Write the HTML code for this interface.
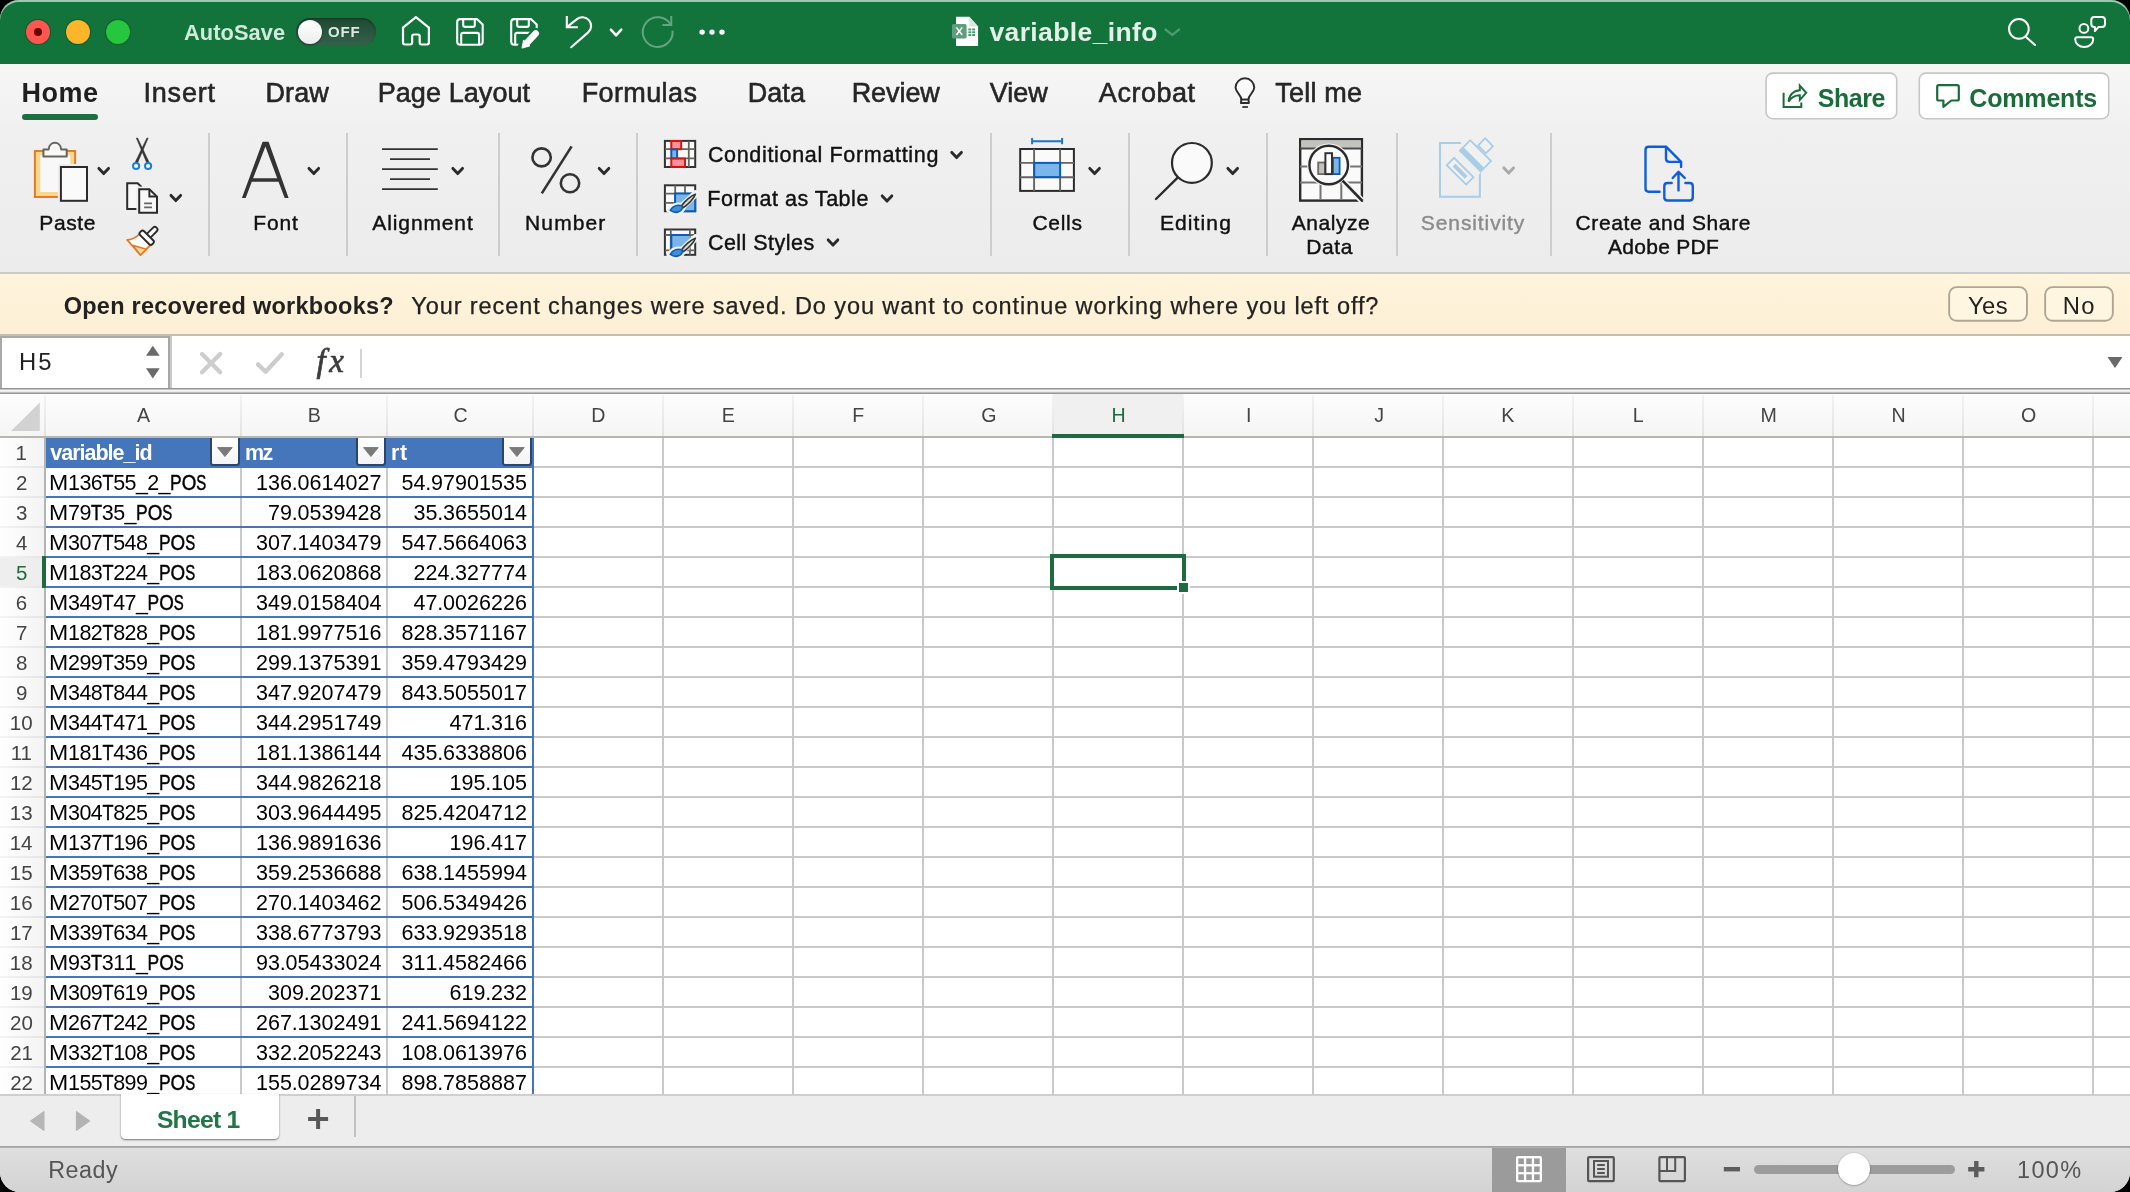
<!DOCTYPE html>
<html><head><meta charset="utf-8"><title>variable_info</title>
<style>
html,body{margin:0;padding:0;background:#000;}
body{width:2130px;height:1192px;overflow:hidden;position:relative;font-family:"Liberation Sans",sans-serif;}
#win{will-change:transform;position:absolute;left:0;top:0;width:2130px;height:1192px;border-radius:19px 19px 20px 20px;overflow:hidden;background:#fff;}
.t{position:absolute;white-space:pre;line-height:1;font-family:"Liberation Sans",sans-serif;}
.b{position:absolute;box-sizing:border-box;}
svg{overflow:visible;}
</style></head><body><div id="win">
<div class="b" style="left:0px;top:0px;width:2130px;height:64px;background:#12733b;"></div>
<div class="b" style="left:0px;top:0px;width:2130px;height:64px;border-radius:19px 19px 0 0;box-shadow:inset 0 2px 0 #9ccab0, inset 1.5px 0 0 rgba(156,202,176,0);"></div>
<div class="b" style="left:0px;top:64px;width:2130px;height:61px;background:linear-gradient(#f6f6f6,#f1f1f1);"></div>
<div class="b" style="left:0px;top:125px;width:2130px;height:147px;background:linear-gradient(#f0f0f0,#ececec);"></div>
<div class="b" style="left:0px;top:272px;width:2130px;height:2px;background:#c9c9c9;"></div>
<div class="b" style="left:0px;top:274px;width:2130px;height:60px;background:linear-gradient(#fff5dc,#fcefd5);"></div>
<div class="b" style="left:0px;top:334px;width:2130px;height:2px;background:#c6bfab;"></div>
<div class="b" style="left:0px;top:336px;width:2130px;height:53px;background:#fff;"></div>
<div class="b" style="left:0px;top:388px;width:2130px;height:1px;background:#959595;"></div>
<div class="b" style="left:0px;top:389px;width:2130px;height:1px;background:#c4c4c4;"></div>
<div class="b" style="left:0px;top:390px;width:2130px;height:1px;background:#f6f6f6;"></div>
<div class="b" style="left:0px;top:391px;width:2130px;height:1px;background:#ececec;"></div>
<div class="b" style="left:0px;top:392px;width:2130px;height:1px;background:#bdbdbd;"></div>
<div class="b" style="left:0px;top:393px;width:2130px;height:1px;background:#989898;"></div>
<div class="b" style="left:25px;top:19px;width:26px;height:26px;border-radius:50%;background:#0d5a2d;"></div>
<div class="b" style="left:26px;top:20px;width:24px;height:24px;border-radius:50%;background:#ff5650;"></div>
<div class="b" style="left:65px;top:19px;width:26px;height:26px;border-radius:50%;background:#0d5a2d;"></div>
<div class="b" style="left:66px;top:20px;width:24px;height:24px;border-radius:50%;background:#fdb52a;"></div>
<div class="b" style="left:105px;top:19px;width:26px;height:26px;border-radius:50%;background:#0d5a2d;"></div>
<div class="b" style="left:106px;top:20px;width:24px;height:24px;border-radius:50%;background:#27c63f;"></div>
<div class="b" style="left:34px;top:28px;width:8px;height:8px;border-radius:50%;background:#6b0000;"></div>
<span class="t" style="left:184.06px;top:22px;font-size:21.8px;color:#d5e8dc;font-weight:bold;letter-spacing:0.063px;">AutoSave</span>
<div class="b" style="left:296.3px;top:17.9px;width:79.7px;height:27.9px;border-radius:14px;background:linear-gradient(#1d4a30,#34614b);box-shadow:inset 0 1px 2px rgba(0,0,0,.3);"></div>
<div class="b" style="left:297.5px;top:19.7px;width:24.5px;height:24.5px;border-radius:50%;background:linear-gradient(#ffffff,#ededed);box-shadow:0 1px 2px rgba(0,0,0,.4);"></div>
<span class="t" style="left:328.08px;top:24px;font-size:15px;color:#dce9e1;font-weight:bold;letter-spacing:0.836px;">OFF</span>
<span class="t" style="left:989.40px;top:19px;font-size:26.5px;color:#e4f0e9;font-weight:bold;letter-spacing:0.388px;">variable_info</span>
<span class="t" style="left:21.59px;top:80px;font-size:27px;color:#1f1f1f;font-weight:bold;letter-spacing:0.505px;">Home</span>
<div class="b" style="left:22px;top:114px;width:76px;height:6px;background:#1c6f3f;border-radius:3px;"></div>
<span class="t" style="left:143.41px;top:80px;font-size:27px;color:#262626;letter-spacing:0.833px;-webkit-text-stroke:0.6px #262626;">Insert</span>
<span class="t" style="left:265.39px;top:80px;font-size:27px;color:#262626;letter-spacing:0.148px;-webkit-text-stroke:0.6px #262626;">Draw</span>
<span class="t" style="left:377.69px;top:80px;font-size:27px;color:#262626;letter-spacing:0.079px;-webkit-text-stroke:0.6px #262626;">Page Layout</span>
<span class="t" style="left:581.69px;top:80px;font-size:27px;color:#262626;letter-spacing:0.381px;-webkit-text-stroke:0.6px #262626;">Formulas</span>
<span class="t" style="left:747.69px;top:80px;font-size:27px;color:#262626;letter-spacing:0.061px;-webkit-text-stroke:0.6px #262626;">Data</span>
<span class="t" style="left:851.69px;top:80px;font-size:27px;color:#262626;letter-spacing:-0.076px;-webkit-text-stroke:0.6px #262626;">Review</span>
<span class="t" style="left:989.78px;top:80px;font-size:27px;color:#262626;letter-spacing:0.006px;-webkit-text-stroke:0.6px #262626;">View</span>
<span class="t" style="left:1098.85px;top:80px;font-size:27px;color:#262626;letter-spacing:0.533px;-webkit-text-stroke:0.6px #262626;">Acrobat</span>
<span class="t" style="left:1275.29px;top:80px;font-size:27px;color:#262626;letter-spacing:0.214px;-webkit-text-stroke:0.6px #262626;">Tell me</span>
<svg class="b" style="left:0px;top:0px;pointer-events:none" width="2130" height="1192" viewBox="0 0 2130 1192"><rect x="1766.1" y="73.1" width="130.6" height="45.6" rx="6.5" fill="#fff" stroke="#c8c6c2" stroke-width="1.6"/></svg>
<svg class="b" style="left:0px;top:0px;pointer-events:none" width="2130" height="1192" viewBox="0 0 2130 1192"><rect x="1919.3" y="73.1" width="189.4" height="45.6" rx="6.5" fill="#fff" stroke="#c8c6c2" stroke-width="1.6"/></svg>
<span class="t" style="left:1817.68px;top:86px;font-size:25px;color:#1a6c3b;font-weight:bold;letter-spacing:-0.452px;">Share</span>
<span class="t" style="left:1969.37px;top:86px;font-size:25px;color:#1a6c3b;font-weight:bold;letter-spacing:-0.191px;">Comments</span>
<div class="b" style="left:208px;top:132.5px;width:2px;height:123px;background:#cdcdcd;"></div>
<div class="b" style="left:346px;top:132.5px;width:2px;height:123px;background:#cdcdcd;"></div>
<div class="b" style="left:497.5px;top:132.5px;width:2px;height:123px;background:#cdcdcd;"></div>
<div class="b" style="left:635.5px;top:132.5px;width:2px;height:123px;background:#cdcdcd;"></div>
<div class="b" style="left:989.7px;top:132.5px;width:2px;height:123px;background:#cdcdcd;"></div>
<div class="b" style="left:1127.7px;top:132.5px;width:2px;height:123px;background:#cdcdcd;"></div>
<div class="b" style="left:1265.7px;top:132.5px;width:2px;height:123px;background:#cdcdcd;"></div>
<div class="b" style="left:1395.8px;top:132.5px;width:2px;height:123px;background:#cdcdcd;"></div>
<div class="b" style="left:1550.2px;top:132.5px;width:2px;height:123px;background:#cdcdcd;"></div>
<span class="t" style="left:39.28px;top:212px;font-size:21px;color:#111;letter-spacing:0.614px;-webkit-text-stroke:0.42px #111;">Paste</span>
<span class="t" style="left:253.28px;top:212px;font-size:21px;color:#111;letter-spacing:0.852px;-webkit-text-stroke:0.42px #111;">Font</span>
<span class="t" style="left:372.36px;top:212px;font-size:21px;color:#111;letter-spacing:0.876px;-webkit-text-stroke:0.42px #111;">Alignment</span>
<span class="t" style="left:525.08px;top:212px;font-size:21px;color:#111;letter-spacing:1.116px;-webkit-text-stroke:0.42px #111;">Number</span>
<span class="t" style="left:1032.43px;top:212px;font-size:21px;color:#111;letter-spacing:0.712px;-webkit-text-stroke:0.42px #111;">Cells</span>
<span class="t" style="left:1159.88px;top:212px;font-size:21px;color:#111;letter-spacing:1.128px;-webkit-text-stroke:0.42px #111;">Editing</span>
<span class="t" style="left:1291.66px;top:212px;font-size:21px;color:#111;letter-spacing:0.561px;-webkit-text-stroke:0.42px #111;">Analyze</span>
<span class="t" style="left:1306.18px;top:236px;font-size:21px;color:#111;letter-spacing:0.621px;-webkit-text-stroke:0.42px #111;">Data</span>
<span class="t" style="left:1420.85px;top:212px;font-size:21px;color:#8c8c8c;letter-spacing:0.896px;-webkit-text-stroke:0.42px #8c8c8c;">Sensitivity</span>
<span class="t" style="left:1575.53px;top:212px;font-size:21px;color:#111;letter-spacing:0.608px;-webkit-text-stroke:0.42px #111;">Create and Share</span>
<span class="t" style="left:1607.96px;top:236px;font-size:21px;color:#111;letter-spacing:0.290px;-webkit-text-stroke:0.42px #111;">Adobe PDF</span>
<span class="t" style="left:707.91px;top:145px;font-size:21.5px;color:#111;letter-spacing:0.675px;-webkit-text-stroke:0.42px #111;">Conditional Formatting</span>
<span class="t" style="left:707.24px;top:189px;font-size:21.5px;color:#111;letter-spacing:0.526px;-webkit-text-stroke:0.42px #111;">Format as Table</span>
<span class="t" style="left:707.91px;top:233px;font-size:21.5px;color:#111;letter-spacing:0.471px;-webkit-text-stroke:0.42px #111;">Cell Styles</span>
<svg class="b" style="left:0px;top:0px;pointer-events:none" width="2130" height="1192" viewBox="0 0 2130 1192"><path d="M98.90 168.40 L103.70 173.60 L108.50 168.40" fill="none" stroke="#2b2b2b" stroke-width="2.9" stroke-linecap="round" stroke-linejoin="round"/></svg>
<svg class="b" style="left:0px;top:0px;pointer-events:none" width="2130" height="1192" viewBox="0 0 2130 1192"><path d="M171.00 195.40 L175.80 200.60 L180.60 195.40" fill="none" stroke="#2b2b2b" stroke-width="2.9" stroke-linecap="round" stroke-linejoin="round"/></svg>
<svg class="b" style="left:0px;top:0px;pointer-events:none" width="2130" height="1192" viewBox="0 0 2130 1192"><path d="M309.00 168.40 L313.80 173.60 L318.60 168.40" fill="none" stroke="#2b2b2b" stroke-width="2.9" stroke-linecap="round" stroke-linejoin="round"/></svg>
<svg class="b" style="left:0px;top:0px;pointer-events:none" width="2130" height="1192" viewBox="0 0 2130 1192"><path d="M452.90 168.40 L457.70 173.60 L462.50 168.40" fill="none" stroke="#2b2b2b" stroke-width="2.9" stroke-linecap="round" stroke-linejoin="round"/></svg>
<svg class="b" style="left:0px;top:0px;pointer-events:none" width="2130" height="1192" viewBox="0 0 2130 1192"><path d="M599.20 168.40 L604.00 173.60 L608.80 168.40" fill="none" stroke="#2b2b2b" stroke-width="2.9" stroke-linecap="round" stroke-linejoin="round"/></svg>
<svg class="b" style="left:0px;top:0px;pointer-events:none" width="2130" height="1192" viewBox="0 0 2130 1192"><path d="M951.80 152.40 L956.60 157.60 L961.40 152.40" fill="none" stroke="#2b2b2b" stroke-width="2.9" stroke-linecap="round" stroke-linejoin="round"/></svg>
<svg class="b" style="left:0px;top:0px;pointer-events:none" width="2130" height="1192" viewBox="0 0 2130 1192"><path d="M882.20 195.90 L887.00 201.10 L891.80 195.90" fill="none" stroke="#2b2b2b" stroke-width="2.9" stroke-linecap="round" stroke-linejoin="round"/></svg>
<svg class="b" style="left:0px;top:0px;pointer-events:none" width="2130" height="1192" viewBox="0 0 2130 1192"><path d="M828.20 239.90 L833.00 245.10 L837.80 239.90" fill="none" stroke="#2b2b2b" stroke-width="2.9" stroke-linecap="round" stroke-linejoin="round"/></svg>
<svg class="b" style="left:0px;top:0px;pointer-events:none" width="2130" height="1192" viewBox="0 0 2130 1192"><path d="M1089.80 168.40 L1094.60 173.60 L1099.40 168.40" fill="none" stroke="#2b2b2b" stroke-width="2.9" stroke-linecap="round" stroke-linejoin="round"/></svg>
<svg class="b" style="left:0px;top:0px;pointer-events:none" width="2130" height="1192" viewBox="0 0 2130 1192"><path d="M1227.90 168.40 L1232.70 173.60 L1237.50 168.40" fill="none" stroke="#2b2b2b" stroke-width="2.9" stroke-linecap="round" stroke-linejoin="round"/></svg>
<svg class="b" style="left:0px;top:0px;pointer-events:none" width="2130" height="1192" viewBox="0 0 2130 1192"><path d="M1503.90 167.90 L1508.70 173.10 L1513.50 167.90" fill="none" stroke="#a9a9a9" stroke-width="2.9" stroke-linecap="round" stroke-linejoin="round"/></svg>
<span class="t" style="left:63.74px;top:295px;font-size:23.5px;color:#222;font-weight:bold;letter-spacing:0.252px;">Open recovered workbooks?</span>
<span class="t" style="left:411.28px;top:295px;font-size:23.5px;color:#222;letter-spacing:0.914px;-webkit-text-stroke:0.25px #222;">Your recent changes were saved. Do you want to continue working where you left off?</span>
<svg class="b" style="left:0px;top:0px;pointer-events:none" width="2130" height="1192" viewBox="0 0 2130 1192"><rect x="1949.15" y="287.15" width="77.8" height="33.6" rx="7.5" fill="#fef6e0" stroke="#aea693" stroke-width="1.9"/></svg>
<svg class="b" style="left:0px;top:0px;pointer-events:none" width="2130" height="1192" viewBox="0 0 2130 1192"><rect x="2045.15" y="287.15" width="67.69999999999999" height="33.6" rx="7.5" fill="#fef6e0" stroke="#aea693" stroke-width="1.9"/></svg>
<span class="t" style="left:1967.88px;top:294px;font-size:23.8px;color:#222;letter-spacing:0.428px;">Yes</span>
<span class="t" style="left:2062.75px;top:294px;font-size:23.8px;color:#222;letter-spacing:1.428px;">No</span>
<div class="b" style="left:0px;top:336px;width:170px;height:52px;border-top:2px solid #a9a9a9;border-left:2px solid #a9a9a9;border-right:2px solid #a6a6a6;background:#fff;"></div>
<div class="b" style="left:170px;top:336px;width:2px;height:52px;background:#c9c9c9;"></div>
<span class="t" style="left:19.05px;top:350px;font-size:23.8px;color:#222;letter-spacing:2.028px;">H5</span>
<svg class="b" style="left:0px;top:0px;" width="2130" height="1192" viewBox="0 0 2130 1192">
<path d="M146 355.8 L152.8 345.8 L159.7 355.8 Z" fill="#6a6a6a"/>
<path d="M146 368.2 L152.8 378.4 L159.7 368.2 Z" fill="#6a6a6a"/>
<path d="M202 354 L220.2 372.2 M220.2 354 L202 372.2" stroke="#cdcdcd" stroke-width="4.3" stroke-linecap="round" fill="none"/>
<path d="M258 364.4 L265.6 371.8 L281.8 354.2" stroke="#cdcdcd" stroke-width="4.3" stroke-linecap="round" stroke-linejoin="round" fill="none"/>
<path d="M2107.5 357 L2122.5 357 L2115 368 Z" fill="#6a6a6a"/>
</svg>
<div class="b" style="left:360px;top:348.5px;width:1.5px;height:29px;background:#d4d4d4;"></div>
<span class="t" style="left:316.5px;top:345px;font-size:33px;font-family:'Liberation Serif',serif;font-style:italic;color:#3c3c3c;letter-spacing:3.6px;-webkit-text-stroke:0.7px #3c3c3c;">fx</span>
<div class="b" style="left:0px;top:394px;width:2130px;height:42px;background:linear-gradient(#fdfdfd,#f5f5f5);"></div>
<div class="b" style="left:1053px;top:394px;width:130px;height:42px;background:#f0f0f0;"></div>
<div class="b" style="left:0px;top:436px;width:2130px;height:2px;background:#b9b6b0;"></div>
<div class="b" style="left:0px;top:438px;width:2130px;height:656px;background:#fff;"></div>
<div class="b" style="left:0px;top:438px;width:45px;height:656px;background:linear-gradient(90deg,#ffffff,#f3f3f3);"></div>
<div class="b" style="left:0px;top:557px;width:45px;height:30px;background:#eeeeee;"></div>
<div class="b" style="left:44px;top:395px;width:2px;height:41px;background:linear-gradient(#f3f3f3,#e2e2e2);"></div>
<div class="b" style="left:44px;top:438px;width:2px;height:656px;background:#c9c9c9;"></div>
<div class="b" style="left:240px;top:395px;width:2px;height:41px;background:linear-gradient(#f3f3f3,#e2e2e2);"></div>
<div class="b" style="left:240px;top:438px;width:2px;height:656px;background:#c9c9c9;"></div>
<div class="b" style="left:386px;top:395px;width:2px;height:41px;background:linear-gradient(#f3f3f3,#e2e2e2);"></div>
<div class="b" style="left:386px;top:438px;width:2px;height:656px;background:#c9c9c9;"></div>
<div class="b" style="left:532px;top:395px;width:2px;height:41px;background:linear-gradient(#f3f3f3,#e2e2e2);"></div>
<div class="b" style="left:532px;top:438px;width:2px;height:656px;background:#c9c9c9;"></div>
<div class="b" style="left:662px;top:395px;width:2px;height:41px;background:linear-gradient(#f3f3f3,#e2e2e2);"></div>
<div class="b" style="left:662px;top:438px;width:2px;height:656px;background:#c9c9c9;"></div>
<div class="b" style="left:792px;top:395px;width:2px;height:41px;background:linear-gradient(#f3f3f3,#e2e2e2);"></div>
<div class="b" style="left:792px;top:438px;width:2px;height:656px;background:#c9c9c9;"></div>
<div class="b" style="left:922px;top:395px;width:2px;height:41px;background:linear-gradient(#f3f3f3,#e2e2e2);"></div>
<div class="b" style="left:922px;top:438px;width:2px;height:656px;background:#c9c9c9;"></div>
<div class="b" style="left:1052px;top:395px;width:2px;height:41px;background:linear-gradient(#f3f3f3,#e2e2e2);"></div>
<div class="b" style="left:1052px;top:438px;width:2px;height:656px;background:#c9c9c9;"></div>
<div class="b" style="left:1182px;top:395px;width:2px;height:41px;background:linear-gradient(#f3f3f3,#e2e2e2);"></div>
<div class="b" style="left:1182px;top:438px;width:2px;height:656px;background:#c9c9c9;"></div>
<div class="b" style="left:1312px;top:395px;width:2px;height:41px;background:linear-gradient(#f3f3f3,#e2e2e2);"></div>
<div class="b" style="left:1312px;top:438px;width:2px;height:656px;background:#c9c9c9;"></div>
<div class="b" style="left:1442px;top:395px;width:2px;height:41px;background:linear-gradient(#f3f3f3,#e2e2e2);"></div>
<div class="b" style="left:1442px;top:438px;width:2px;height:656px;background:#c9c9c9;"></div>
<div class="b" style="left:1572px;top:395px;width:2px;height:41px;background:linear-gradient(#f3f3f3,#e2e2e2);"></div>
<div class="b" style="left:1572px;top:438px;width:2px;height:656px;background:#c9c9c9;"></div>
<div class="b" style="left:1702px;top:395px;width:2px;height:41px;background:linear-gradient(#f3f3f3,#e2e2e2);"></div>
<div class="b" style="left:1702px;top:438px;width:2px;height:656px;background:#c9c9c9;"></div>
<div class="b" style="left:1832px;top:395px;width:2px;height:41px;background:linear-gradient(#f3f3f3,#e2e2e2);"></div>
<div class="b" style="left:1832px;top:438px;width:2px;height:656px;background:#c9c9c9;"></div>
<div class="b" style="left:1962px;top:395px;width:2px;height:41px;background:linear-gradient(#f3f3f3,#e2e2e2);"></div>
<div class="b" style="left:1962px;top:438px;width:2px;height:656px;background:#c9c9c9;"></div>
<div class="b" style="left:2092px;top:395px;width:2px;height:41px;background:linear-gradient(#f3f3f3,#e2e2e2);"></div>
<div class="b" style="left:2092px;top:438px;width:2px;height:656px;background:#c9c9c9;"></div>
<div class="b" style="left:0px;top:466px;width:44px;height:2px;background:linear-gradient(90deg,#f4f4f4,#e4e4e4);"></div>
<div class="b" style="left:45px;top:466px;width:2085px;height:2px;background:#c9c9c9;"></div>
<div class="b" style="left:0px;top:496px;width:44px;height:2px;background:linear-gradient(90deg,#f4f4f4,#e4e4e4);"></div>
<div class="b" style="left:45px;top:496px;width:2085px;height:2px;background:#c9c9c9;"></div>
<div class="b" style="left:0px;top:526px;width:44px;height:2px;background:linear-gradient(90deg,#f4f4f4,#e4e4e4);"></div>
<div class="b" style="left:45px;top:526px;width:2085px;height:2px;background:#c9c9c9;"></div>
<div class="b" style="left:0px;top:556px;width:44px;height:2px;background:linear-gradient(90deg,#f4f4f4,#e4e4e4);"></div>
<div class="b" style="left:45px;top:556px;width:2085px;height:2px;background:#c9c9c9;"></div>
<div class="b" style="left:0px;top:586px;width:44px;height:2px;background:linear-gradient(90deg,#f4f4f4,#e4e4e4);"></div>
<div class="b" style="left:45px;top:586px;width:2085px;height:2px;background:#c9c9c9;"></div>
<div class="b" style="left:0px;top:616px;width:44px;height:2px;background:linear-gradient(90deg,#f4f4f4,#e4e4e4);"></div>
<div class="b" style="left:45px;top:616px;width:2085px;height:2px;background:#c9c9c9;"></div>
<div class="b" style="left:0px;top:646px;width:44px;height:2px;background:linear-gradient(90deg,#f4f4f4,#e4e4e4);"></div>
<div class="b" style="left:45px;top:646px;width:2085px;height:2px;background:#c9c9c9;"></div>
<div class="b" style="left:0px;top:676px;width:44px;height:2px;background:linear-gradient(90deg,#f4f4f4,#e4e4e4);"></div>
<div class="b" style="left:45px;top:676px;width:2085px;height:2px;background:#c9c9c9;"></div>
<div class="b" style="left:0px;top:706px;width:44px;height:2px;background:linear-gradient(90deg,#f4f4f4,#e4e4e4);"></div>
<div class="b" style="left:45px;top:706px;width:2085px;height:2px;background:#c9c9c9;"></div>
<div class="b" style="left:0px;top:736px;width:44px;height:2px;background:linear-gradient(90deg,#f4f4f4,#e4e4e4);"></div>
<div class="b" style="left:45px;top:736px;width:2085px;height:2px;background:#c9c9c9;"></div>
<div class="b" style="left:0px;top:766px;width:44px;height:2px;background:linear-gradient(90deg,#f4f4f4,#e4e4e4);"></div>
<div class="b" style="left:45px;top:766px;width:2085px;height:2px;background:#c9c9c9;"></div>
<div class="b" style="left:0px;top:796px;width:44px;height:2px;background:linear-gradient(90deg,#f4f4f4,#e4e4e4);"></div>
<div class="b" style="left:45px;top:796px;width:2085px;height:2px;background:#c9c9c9;"></div>
<div class="b" style="left:0px;top:826px;width:44px;height:2px;background:linear-gradient(90deg,#f4f4f4,#e4e4e4);"></div>
<div class="b" style="left:45px;top:826px;width:2085px;height:2px;background:#c9c9c9;"></div>
<div class="b" style="left:0px;top:856px;width:44px;height:2px;background:linear-gradient(90deg,#f4f4f4,#e4e4e4);"></div>
<div class="b" style="left:45px;top:856px;width:2085px;height:2px;background:#c9c9c9;"></div>
<div class="b" style="left:0px;top:886px;width:44px;height:2px;background:linear-gradient(90deg,#f4f4f4,#e4e4e4);"></div>
<div class="b" style="left:45px;top:886px;width:2085px;height:2px;background:#c9c9c9;"></div>
<div class="b" style="left:0px;top:916px;width:44px;height:2px;background:linear-gradient(90deg,#f4f4f4,#e4e4e4);"></div>
<div class="b" style="left:45px;top:916px;width:2085px;height:2px;background:#c9c9c9;"></div>
<div class="b" style="left:0px;top:946px;width:44px;height:2px;background:linear-gradient(90deg,#f4f4f4,#e4e4e4);"></div>
<div class="b" style="left:45px;top:946px;width:2085px;height:2px;background:#c9c9c9;"></div>
<div class="b" style="left:0px;top:976px;width:44px;height:2px;background:linear-gradient(90deg,#f4f4f4,#e4e4e4);"></div>
<div class="b" style="left:45px;top:976px;width:2085px;height:2px;background:#c9c9c9;"></div>
<div class="b" style="left:0px;top:1006px;width:44px;height:2px;background:linear-gradient(90deg,#f4f4f4,#e4e4e4);"></div>
<div class="b" style="left:45px;top:1006px;width:2085px;height:2px;background:#c9c9c9;"></div>
<div class="b" style="left:0px;top:1036px;width:44px;height:2px;background:linear-gradient(90deg,#f4f4f4,#e4e4e4);"></div>
<div class="b" style="left:45px;top:1036px;width:2085px;height:2px;background:#c9c9c9;"></div>
<div class="b" style="left:0px;top:1066px;width:44px;height:2px;background:linear-gradient(90deg,#f4f4f4,#e4e4e4);"></div>
<div class="b" style="left:45px;top:1066px;width:2085px;height:2px;background:#c9c9c9;"></div>
<span class="t" style="left:137.06px;top:406px;font-size:19.6px;color:#444;">A</span>
<span class="t" style="left:307.78px;top:406px;font-size:19.6px;color:#444;">B</span>
<span class="t" style="left:453.40px;top:406px;font-size:19.6px;color:#444;">C</span>
<span class="t" style="left:591.19px;top:406px;font-size:19.6px;color:#444;">D</span>
<span class="t" style="left:721.68px;top:406px;font-size:19.6px;color:#444;">E</span>
<span class="t" style="left:852.20px;top:406px;font-size:19.6px;color:#444;">F</span>
<span class="t" style="left:981.22px;top:406px;font-size:19.6px;color:#444;">G</span>
<span class="t" style="left:1111.52px;top:406px;font-size:19.6px;color:#1d6b40;">H</span>
<span class="t" style="left:1245.88px;top:406px;font-size:19.6px;color:#444;">I</span>
<span class="t" style="left:1374.27px;top:406px;font-size:19.6px;color:#444;">J</span>
<span class="t" style="left:1501.37px;top:406px;font-size:19.6px;color:#444;">K</span>
<span class="t" style="left:1632.67px;top:406px;font-size:19.6px;color:#444;">L</span>
<span class="t" style="left:1760.44px;top:406px;font-size:19.6px;color:#444;">M</span>
<span class="t" style="left:1891.52px;top:406px;font-size:19.6px;color:#444;">N</span>
<span class="t" style="left:2020.98px;top:406px;font-size:19.6px;color:#444;">O</span>
<div class="b" style="left:1052px;top:434px;width:132px;height:4px;background:#1e6b41;"></div>
<svg class="b" style="left:0px;top:0px;" width="2130" height="1192" viewBox="0 0 2130 1192"><path d="M39.8 402.5 L39.8 431 L11 431 Z" fill="#d2d2d2"/></svg>
<span class="t" style="left:15.62px;top:443px;font-size:20.5px;color:#444;">1</span>
<span class="t" style="left:15.90px;top:473px;font-size:20.5px;color:#444;">2</span>
<span class="t" style="left:15.96px;top:503px;font-size:20.5px;color:#444;">3</span>
<span class="t" style="left:15.96px;top:533px;font-size:20.5px;color:#444;">4</span>
<span class="t" style="left:15.92px;top:563px;font-size:20.5px;color:#1d6b40;">5</span>
<span class="t" style="left:15.83px;top:593px;font-size:20.5px;color:#444;">6</span>
<span class="t" style="left:15.89px;top:623px;font-size:20.5px;color:#444;">7</span>
<span class="t" style="left:15.90px;top:653px;font-size:20.5px;color:#444;">8</span>
<span class="t" style="left:15.90px;top:683px;font-size:20.5px;color:#444;">9</span>
<span class="t" style="left:9.82px;top:713px;font-size:20.5px;color:#444;">10</span>
<span class="t" style="left:10.68px;top:743px;font-size:20.5px;color:#444;">11</span>
<span class="t" style="left:9.93px;top:773px;font-size:20.5px;color:#444;">12</span>
<span class="t" style="left:9.87px;top:803px;font-size:20.5px;color:#444;">13</span>
<span class="t" style="left:9.72px;top:833px;font-size:20.5px;color:#444;">14</span>
<span class="t" style="left:9.85px;top:863px;font-size:20.5px;color:#444;">15</span>
<span class="t" style="left:9.87px;top:893px;font-size:20.5px;color:#444;">16</span>
<span class="t" style="left:9.93px;top:923px;font-size:20.5px;color:#444;">17</span>
<span class="t" style="left:9.86px;top:953px;font-size:20.5px;color:#444;">18</span>
<span class="t" style="left:9.90px;top:983px;font-size:20.5px;color:#444;">19</span>
<span class="t" style="left:10.08px;top:1013px;font-size:20.5px;color:#444;">20</span>
<span class="t" style="left:10.18px;top:1043px;font-size:20.5px;color:#444;">21</span>
<span class="t" style="left:10.20px;top:1073px;font-size:20.5px;color:#444;">22</span>
<div class="b" style="left:46px;top:438px;width:487px;height:30px;background:#4575bb;"></div>
<div class="b" style="left:45px;top:496px;width:489px;height:2px;background:#4575bb;"></div>
<div class="b" style="left:45px;top:526px;width:489px;height:2px;background:#4575bb;"></div>
<div class="b" style="left:45px;top:556px;width:489px;height:2px;background:#4575bb;"></div>
<div class="b" style="left:45px;top:586px;width:489px;height:2px;background:#4575bb;"></div>
<div class="b" style="left:45px;top:616px;width:489px;height:2px;background:#4575bb;"></div>
<div class="b" style="left:45px;top:646px;width:489px;height:2px;background:#4575bb;"></div>
<div class="b" style="left:45px;top:676px;width:489px;height:2px;background:#4575bb;"></div>
<div class="b" style="left:45px;top:706px;width:489px;height:2px;background:#4575bb;"></div>
<div class="b" style="left:45px;top:736px;width:489px;height:2px;background:#4575bb;"></div>
<div class="b" style="left:45px;top:766px;width:489px;height:2px;background:#4575bb;"></div>
<div class="b" style="left:45px;top:796px;width:489px;height:2px;background:#4575bb;"></div>
<div class="b" style="left:45px;top:826px;width:489px;height:2px;background:#4575bb;"></div>
<div class="b" style="left:45px;top:856px;width:489px;height:2px;background:#4575bb;"></div>
<div class="b" style="left:45px;top:886px;width:489px;height:2px;background:#4575bb;"></div>
<div class="b" style="left:45px;top:916px;width:489px;height:2px;background:#4575bb;"></div>
<div class="b" style="left:45px;top:946px;width:489px;height:2px;background:#4575bb;"></div>
<div class="b" style="left:45px;top:976px;width:489px;height:2px;background:#4575bb;"></div>
<div class="b" style="left:45px;top:1006px;width:489px;height:2px;background:#4575bb;"></div>
<div class="b" style="left:45px;top:1036px;width:489px;height:2px;background:#4575bb;"></div>
<div class="b" style="left:45px;top:1066px;width:489px;height:2px;background:#4575bb;"></div>
<svg class="b" style="left:0px;top:0px;pointer-events:none" width="2130" height="1192" viewBox="0 0 2130 1192"><g font-family="Liberation Sans, sans-serif" font-size="21.5" fill="#000"><text transform="translate(49.10 490) scale(1.072 1)">M</text><text transform="translate(102.50 490) scale(0.838 1)" stroke="#000" stroke-width="0.45">T</text><text transform="translate(170.10 490) scale(0.812 1)" stroke="#000" stroke-width="0.45">P</text><text transform="translate(181.75 490) scale(0.873 1)" stroke="#000" stroke-width="0.45">O</text><text transform="translate(196.35 490) scale(0.697 1)" stroke="#000" stroke-width="0.45">S</text><text x="68.02 79.42 90.82 113.22 124.62 135.92 147.22 158.52" y="490">13655_2_</text><text x="255.92 267.92 279.92 291.71 297.52 309.52 321.52 333.52 345.52 357.52 369.52" y="490">136.0614027</text><text x="401.42 413.42 425.21 431.02 443.02 455.02 467.02 479.02 491.02 503.02 515.02" y="490">54.97901535</text><text transform="translate(49.10 520) scale(1.072 1)">M</text><text transform="translate(91.10 520) scale(0.838 1)" stroke="#000" stroke-width="0.45">T</text><text transform="translate(136.10 520) scale(0.812 1)" stroke="#000" stroke-width="0.45">P</text><text transform="translate(147.75 520) scale(0.873 1)" stroke="#000" stroke-width="0.45">O</text><text transform="translate(162.35 520) scale(0.697 1)" stroke="#000" stroke-width="0.45">S</text><text x="68.02 79.42 101.82 113.22 124.52" y="520">7935_</text><text x="267.92 279.92 291.71 297.52 309.52 321.52 333.52 345.52 357.52 369.52" y="520">79.0539428</text><text x="413.42 425.42 437.21 443.02 455.02 467.02 479.02 491.02 503.02 515.02" y="520">35.3655014</text><text transform="translate(49.10 550) scale(1.072 1)">M</text><text transform="translate(102.50 550) scale(0.838 1)" stroke="#000" stroke-width="0.45">T</text><text transform="translate(158.90 550) scale(0.812 1)" stroke="#000" stroke-width="0.45">P</text><text transform="translate(170.55 550) scale(0.873 1)" stroke="#000" stroke-width="0.45">O</text><text transform="translate(185.15 550) scale(0.697 1)" stroke="#000" stroke-width="0.45">S</text><text x="68.02 79.42 90.82 113.22 124.62 136.02 147.32" y="550">307548_</text><text x="255.92 267.92 279.92 291.71 297.52 309.52 321.52 333.52 345.52 357.52 369.52" y="550">307.1403479</text><text x="401.42 413.42 425.42 437.21 443.02 455.02 467.02 479.02 491.02 503.02 515.02" y="550">547.5664063</text><text transform="translate(49.10 580) scale(1.072 1)">M</text><text transform="translate(102.50 580) scale(0.838 1)" stroke="#000" stroke-width="0.45">T</text><text transform="translate(158.90 580) scale(0.812 1)" stroke="#000" stroke-width="0.45">P</text><text transform="translate(170.55 580) scale(0.873 1)" stroke="#000" stroke-width="0.45">O</text><text transform="translate(185.15 580) scale(0.697 1)" stroke="#000" stroke-width="0.45">S</text><text x="68.02 79.42 90.82 113.22 124.62 136.02 147.32" y="580">183224_</text><text x="255.92 267.92 279.92 291.71 297.52 309.52 321.52 333.52 345.52 357.52 369.52" y="580">183.0620868</text><text x="413.42 425.42 437.42 449.21 455.02 467.02 479.02 491.02 503.02 515.02" y="580">224.327774</text><text transform="translate(49.10 610) scale(1.072 1)">M</text><text transform="translate(102.50 610) scale(0.838 1)" stroke="#000" stroke-width="0.45">T</text><text transform="translate(147.50 610) scale(0.812 1)" stroke="#000" stroke-width="0.45">P</text><text transform="translate(159.15 610) scale(0.873 1)" stroke="#000" stroke-width="0.45">O</text><text transform="translate(173.75 610) scale(0.697 1)" stroke="#000" stroke-width="0.45">S</text><text x="68.02 79.42 90.82 113.22 124.62 135.92" y="610">34947_</text><text x="255.92 267.92 279.92 291.71 297.52 309.52 321.52 333.52 345.52 357.52 369.52" y="610">349.0158404</text><text x="413.42 425.42 437.21 443.02 455.02 467.02 479.02 491.02 503.02 515.02" y="610">47.0026226</text><text transform="translate(49.10 640) scale(1.072 1)">M</text><text transform="translate(102.50 640) scale(0.838 1)" stroke="#000" stroke-width="0.45">T</text><text transform="translate(158.90 640) scale(0.812 1)" stroke="#000" stroke-width="0.45">P</text><text transform="translate(170.55 640) scale(0.873 1)" stroke="#000" stroke-width="0.45">O</text><text transform="translate(185.15 640) scale(0.697 1)" stroke="#000" stroke-width="0.45">S</text><text x="68.02 79.42 90.82 113.22 124.62 136.02 147.32" y="640">182828_</text><text x="255.92 267.92 279.92 291.71 297.52 309.52 321.52 333.52 345.52 357.52 369.52" y="640">181.9977516</text><text x="401.42 413.42 425.42 437.21 443.02 455.02 467.02 479.02 491.02 503.02 515.02" y="640">828.3571167</text><text transform="translate(49.10 670) scale(1.072 1)">M</text><text transform="translate(102.50 670) scale(0.838 1)" stroke="#000" stroke-width="0.45">T</text><text transform="translate(158.90 670) scale(0.812 1)" stroke="#000" stroke-width="0.45">P</text><text transform="translate(170.55 670) scale(0.873 1)" stroke="#000" stroke-width="0.45">O</text><text transform="translate(185.15 670) scale(0.697 1)" stroke="#000" stroke-width="0.45">S</text><text x="68.02 79.42 90.82 113.22 124.62 136.02 147.32" y="670">299359_</text><text x="255.92 267.92 279.92 291.71 297.52 309.52 321.52 333.52 345.52 357.52 369.52" y="670">299.1375391</text><text x="401.42 413.42 425.42 437.21 443.02 455.02 467.02 479.02 491.02 503.02 515.02" y="670">359.4793429</text><text transform="translate(49.10 700) scale(1.072 1)">M</text><text transform="translate(102.50 700) scale(0.838 1)" stroke="#000" stroke-width="0.45">T</text><text transform="translate(158.90 700) scale(0.812 1)" stroke="#000" stroke-width="0.45">P</text><text transform="translate(170.55 700) scale(0.873 1)" stroke="#000" stroke-width="0.45">O</text><text transform="translate(185.15 700) scale(0.697 1)" stroke="#000" stroke-width="0.45">S</text><text x="68.02 79.42 90.82 113.22 124.62 136.02 147.32" y="700">348844_</text><text x="255.92 267.92 279.92 291.71 297.52 309.52 321.52 333.52 345.52 357.52 369.52" y="700">347.9207479</text><text x="401.42 413.42 425.42 437.21 443.02 455.02 467.02 479.02 491.02 503.02 515.02" y="700">843.5055017</text><text transform="translate(49.10 730) scale(1.072 1)">M</text><text transform="translate(102.50 730) scale(0.838 1)" stroke="#000" stroke-width="0.45">T</text><text transform="translate(158.90 730) scale(0.812 1)" stroke="#000" stroke-width="0.45">P</text><text transform="translate(170.55 730) scale(0.873 1)" stroke="#000" stroke-width="0.45">O</text><text transform="translate(185.15 730) scale(0.697 1)" stroke="#000" stroke-width="0.45">S</text><text x="68.02 79.42 90.82 113.22 124.62 136.02 147.32" y="730">344471_</text><text x="255.92 267.92 279.92 291.71 297.52 309.52 321.52 333.52 345.52 357.52 369.52" y="730">344.2951749</text><text x="449.42 461.42 473.42 485.21 491.02 503.02 515.02" y="730">471.316</text><text transform="translate(49.10 760) scale(1.072 1)">M</text><text transform="translate(102.50 760) scale(0.838 1)" stroke="#000" stroke-width="0.45">T</text><text transform="translate(158.90 760) scale(0.812 1)" stroke="#000" stroke-width="0.45">P</text><text transform="translate(170.55 760) scale(0.873 1)" stroke="#000" stroke-width="0.45">O</text><text transform="translate(185.15 760) scale(0.697 1)" stroke="#000" stroke-width="0.45">S</text><text x="68.02 79.42 90.82 113.22 124.62 136.02 147.32" y="760">181436_</text><text x="255.92 267.92 279.92 291.71 297.52 309.52 321.52 333.52 345.52 357.52 369.52" y="760">181.1386144</text><text x="401.42 413.42 425.42 437.21 443.02 455.02 467.02 479.02 491.02 503.02 515.02" y="760">435.6338806</text><text transform="translate(49.10 790) scale(1.072 1)">M</text><text transform="translate(102.50 790) scale(0.838 1)" stroke="#000" stroke-width="0.45">T</text><text transform="translate(158.90 790) scale(0.812 1)" stroke="#000" stroke-width="0.45">P</text><text transform="translate(170.55 790) scale(0.873 1)" stroke="#000" stroke-width="0.45">O</text><text transform="translate(185.15 790) scale(0.697 1)" stroke="#000" stroke-width="0.45">S</text><text x="68.02 79.42 90.82 113.22 124.62 136.02 147.32" y="790">345195_</text><text x="255.92 267.92 279.92 291.71 297.52 309.52 321.52 333.52 345.52 357.52 369.52" y="790">344.9826218</text><text x="449.42 461.42 473.42 485.21 491.02 503.02 515.02" y="790">195.105</text><text transform="translate(49.10 820) scale(1.072 1)">M</text><text transform="translate(102.50 820) scale(0.838 1)" stroke="#000" stroke-width="0.45">T</text><text transform="translate(158.90 820) scale(0.812 1)" stroke="#000" stroke-width="0.45">P</text><text transform="translate(170.55 820) scale(0.873 1)" stroke="#000" stroke-width="0.45">O</text><text transform="translate(185.15 820) scale(0.697 1)" stroke="#000" stroke-width="0.45">S</text><text x="68.02 79.42 90.82 113.22 124.62 136.02 147.32" y="820">304825_</text><text x="255.92 267.92 279.92 291.71 297.52 309.52 321.52 333.52 345.52 357.52 369.52" y="820">303.9644495</text><text x="401.42 413.42 425.42 437.21 443.02 455.02 467.02 479.02 491.02 503.02 515.02" y="820">825.4204712</text><text transform="translate(49.10 850) scale(1.072 1)">M</text><text transform="translate(102.50 850) scale(0.838 1)" stroke="#000" stroke-width="0.45">T</text><text transform="translate(158.90 850) scale(0.812 1)" stroke="#000" stroke-width="0.45">P</text><text transform="translate(170.55 850) scale(0.873 1)" stroke="#000" stroke-width="0.45">O</text><text transform="translate(185.15 850) scale(0.697 1)" stroke="#000" stroke-width="0.45">S</text><text x="68.02 79.42 90.82 113.22 124.62 136.02 147.32" y="850">137196_</text><text x="255.92 267.92 279.92 291.71 297.52 309.52 321.52 333.52 345.52 357.52 369.52" y="850">136.9891636</text><text x="449.42 461.42 473.42 485.21 491.02 503.02 515.02" y="850">196.417</text><text transform="translate(49.10 880) scale(1.072 1)">M</text><text transform="translate(102.50 880) scale(0.838 1)" stroke="#000" stroke-width="0.45">T</text><text transform="translate(158.90 880) scale(0.812 1)" stroke="#000" stroke-width="0.45">P</text><text transform="translate(170.55 880) scale(0.873 1)" stroke="#000" stroke-width="0.45">O</text><text transform="translate(185.15 880) scale(0.697 1)" stroke="#000" stroke-width="0.45">S</text><text x="68.02 79.42 90.82 113.22 124.62 136.02 147.32" y="880">359638_</text><text x="255.92 267.92 279.92 291.71 297.52 309.52 321.52 333.52 345.52 357.52 369.52" y="880">359.2536688</text><text x="401.42 413.42 425.42 437.21 443.02 455.02 467.02 479.02 491.02 503.02 515.02" y="880">638.1455994</text><text transform="translate(49.10 910) scale(1.072 1)">M</text><text transform="translate(102.50 910) scale(0.838 1)" stroke="#000" stroke-width="0.45">T</text><text transform="translate(158.90 910) scale(0.812 1)" stroke="#000" stroke-width="0.45">P</text><text transform="translate(170.55 910) scale(0.873 1)" stroke="#000" stroke-width="0.45">O</text><text transform="translate(185.15 910) scale(0.697 1)" stroke="#000" stroke-width="0.45">S</text><text x="68.02 79.42 90.82 113.22 124.62 136.02 147.32" y="910">270507_</text><text x="255.92 267.92 279.92 291.71 297.52 309.52 321.52 333.52 345.52 357.52 369.52" y="910">270.1403462</text><text x="401.42 413.42 425.42 437.21 443.02 455.02 467.02 479.02 491.02 503.02 515.02" y="910">506.5349426</text><text transform="translate(49.10 940) scale(1.072 1)">M</text><text transform="translate(102.50 940) scale(0.838 1)" stroke="#000" stroke-width="0.45">T</text><text transform="translate(158.90 940) scale(0.812 1)" stroke="#000" stroke-width="0.45">P</text><text transform="translate(170.55 940) scale(0.873 1)" stroke="#000" stroke-width="0.45">O</text><text transform="translate(185.15 940) scale(0.697 1)" stroke="#000" stroke-width="0.45">S</text><text x="68.02 79.42 90.82 113.22 124.62 136.02 147.32" y="940">339634_</text><text x="255.92 267.92 279.92 291.71 297.52 309.52 321.52 333.52 345.52 357.52 369.52" y="940">338.6773793</text><text x="401.42 413.42 425.42 437.21 443.02 455.02 467.02 479.02 491.02 503.02 515.02" y="940">633.9293518</text><text transform="translate(49.10 970) scale(1.072 1)">M</text><text transform="translate(91.10 970) scale(0.838 1)" stroke="#000" stroke-width="0.45">T</text><text transform="translate(147.50 970) scale(0.812 1)" stroke="#000" stroke-width="0.45">P</text><text transform="translate(159.15 970) scale(0.873 1)" stroke="#000" stroke-width="0.45">O</text><text transform="translate(173.75 970) scale(0.697 1)" stroke="#000" stroke-width="0.45">S</text><text x="68.02 79.42 101.82 113.22 124.62 135.92" y="970">93311_</text><text x="255.92 267.92 279.71 285.52 297.52 309.52 321.52 333.52 345.52 357.52 369.52" y="970">93.05433024</text><text x="401.42 413.42 425.42 437.21 443.02 455.02 467.02 479.02 491.02 503.02 515.02" y="970">311.4582466</text><text transform="translate(49.10 1000) scale(1.072 1)">M</text><text transform="translate(102.50 1000) scale(0.838 1)" stroke="#000" stroke-width="0.45">T</text><text transform="translate(158.90 1000) scale(0.812 1)" stroke="#000" stroke-width="0.45">P</text><text transform="translate(170.55 1000) scale(0.873 1)" stroke="#000" stroke-width="0.45">O</text><text transform="translate(185.15 1000) scale(0.697 1)" stroke="#000" stroke-width="0.45">S</text><text x="68.02 79.42 90.82 113.22 124.62 136.02 147.32" y="1000">309619_</text><text x="267.92 279.92 291.92 303.71 309.52 321.52 333.52 345.52 357.52 369.52" y="1000">309.202371</text><text x="449.42 461.42 473.42 485.21 491.02 503.02 515.02" y="1000">619.232</text><text transform="translate(49.10 1030) scale(1.072 1)">M</text><text transform="translate(102.50 1030) scale(0.838 1)" stroke="#000" stroke-width="0.45">T</text><text transform="translate(158.90 1030) scale(0.812 1)" stroke="#000" stroke-width="0.45">P</text><text transform="translate(170.55 1030) scale(0.873 1)" stroke="#000" stroke-width="0.45">O</text><text transform="translate(185.15 1030) scale(0.697 1)" stroke="#000" stroke-width="0.45">S</text><text x="68.02 79.42 90.82 113.22 124.62 136.02 147.32" y="1030">267242_</text><text x="255.92 267.92 279.92 291.71 297.52 309.52 321.52 333.52 345.52 357.52 369.52" y="1030">267.1302491</text><text x="401.42 413.42 425.42 437.21 443.02 455.02 467.02 479.02 491.02 503.02 515.02" y="1030">241.5694122</text><text transform="translate(49.10 1060) scale(1.072 1)">M</text><text transform="translate(102.50 1060) scale(0.838 1)" stroke="#000" stroke-width="0.45">T</text><text transform="translate(158.90 1060) scale(0.812 1)" stroke="#000" stroke-width="0.45">P</text><text transform="translate(170.55 1060) scale(0.873 1)" stroke="#000" stroke-width="0.45">O</text><text transform="translate(185.15 1060) scale(0.697 1)" stroke="#000" stroke-width="0.45">S</text><text x="68.02 79.42 90.82 113.22 124.62 136.02 147.32" y="1060">332108_</text><text x="255.92 267.92 279.92 291.71 297.52 309.52 321.52 333.52 345.52 357.52 369.52" y="1060">332.2052243</text><text x="401.42 413.42 425.42 437.21 443.02 455.02 467.02 479.02 491.02 503.02 515.02" y="1060">108.0613976</text><text transform="translate(49.10 1090) scale(1.072 1)">M</text><text transform="translate(102.50 1090) scale(0.838 1)" stroke="#000" stroke-width="0.45">T</text><text transform="translate(158.90 1090) scale(0.812 1)" stroke="#000" stroke-width="0.45">P</text><text transform="translate(170.55 1090) scale(0.873 1)" stroke="#000" stroke-width="0.45">O</text><text transform="translate(185.15 1090) scale(0.697 1)" stroke="#000" stroke-width="0.45">S</text><text x="68.02 79.42 90.82 113.22 124.62 136.02 147.32" y="1090">155899_</text><text x="255.92 267.92 279.92 291.71 297.52 309.52 321.52 333.52 345.52 357.52 369.52" y="1090">155.0289734</text><text x="401.42 413.42 425.42 437.21 443.02 455.02 467.02 479.02 491.02 503.02 515.02" y="1090">898.7858887</text></g></svg>
<div class="b" style="left:44px;top:438px;width:2px;height:656px;background:#b4b4b4;"></div>
<div class="b" style="left:42px;top:556px;width:4px;height:32px;background:#1e6b41;"></div>
<div class="b" style="left:532px;top:438px;width:2px;height:656px;background:#4575bb;"></div>
<span class="t" style="left:50.22px;top:443px;font-size:21.5px;color:#fff;font-weight:bold;letter-spacing:-0.994px;">variable_id</span>
<span class="t" style="left:245.08px;top:443px;font-size:21.5px;color:#fff;font-weight:bold;letter-spacing:-1.673px;">mz</span>
<span class="t" style="left:391.08px;top:443px;font-size:21.5px;color:#fff;font-weight:bold;letter-spacing:0.653px;">rt</span>
<div class="b" style="left:210.1px;top:438px;width:29.8px;height:28px;background:linear-gradient(#ffffff,#f3f3f3);border:2px solid #2b4669;border-top:none;border-radius:0 0 3.5px 3.5px;"></div>
<svg class="b" style="left:211px;top:438px;" width="28" height="27" viewBox="0 0 28 27"><path d="M6.6 9.6 L21.2 9.6 L13.9 18.5 Z" fill="#7a7a7a" stroke="#7a7a7a" stroke-width="1" stroke-linejoin="round"/></svg>
<div class="b" style="left:356.1px;top:438px;width:29.8px;height:28px;background:linear-gradient(#ffffff,#f3f3f3);border:2px solid #2b4669;border-top:none;border-radius:0 0 3.5px 3.5px;"></div>
<svg class="b" style="left:357px;top:438px;" width="28" height="27" viewBox="0 0 28 27"><path d="M6.6 9.6 L21.2 9.6 L13.9 18.5 Z" fill="#7a7a7a" stroke="#7a7a7a" stroke-width="1" stroke-linejoin="round"/></svg>
<div class="b" style="left:502.1px;top:438px;width:29.8px;height:28px;background:linear-gradient(#ffffff,#f3f3f3);border:2px solid #2b4669;border-top:none;border-radius:0 0 3.5px 3.5px;"></div>
<svg class="b" style="left:503px;top:438px;" width="28" height="27" viewBox="0 0 28 27"><path d="M6.6 9.6 L21.2 9.6 L13.9 18.5 Z" fill="#7a7a7a" stroke="#7a7a7a" stroke-width="1" stroke-linejoin="round"/></svg>
<div class="b" style="left:1050px;top:554px;width:136px;height:36px;border:4px solid #1e6b41;"></div>
<div class="b" style="left:1176.5px;top:580.5px;width:13px;height:13px;background:#fff;"></div>
<div class="b" style="left:1178.5px;top:582.5px;width:9.5px;height:9.5px;background:#1e6b41;"></div>
<div class="b" style="left:0px;top:1094px;width:2130px;height:53px;background:#ededed;"></div>
<div class="b" style="left:0px;top:1094px;width:2130px;height:1.5px;background:#cfcfcf;"></div>
<div class="b" style="left:121px;top:1094px;width:158px;height:45px;background:#fff;border-radius:0 0 4.5px 4.5px;box-shadow:0 1px 2px rgba(0,0,0,.5);"></div>
<div class="b" style="left:121px;top:1094px;width:158px;height:3px;background:#fff;"></div>
<span class="t" style="left:156.89px;top:1108px;font-size:24.7px;color:#217645;font-weight:bold;letter-spacing:-0.744px;">Sheet 1</span>
<svg class="b" style="left:0px;top:0px;" width="2130" height="1192" viewBox="0 0 2130 1192">
<path d="M44 1111.4 L44 1130.6 L30.4 1121 Z" fill="#b6b6b6" stroke="#b6b6b6" stroke-width="1" stroke-linejoin="round"/>
<path d="M76.4 1111.4 L76.4 1130.6 L89.8 1121 Z" fill="#b3b3b3" stroke="#b3b3b3" stroke-width="1" stroke-linejoin="round"/>
<path d="M308.1 1119 L328.1 1119 M318.1 1109 L318.1 1129" stroke="#585858" stroke-width="4" fill="none"/>
</svg>
<div class="b" style="left:354.2px;top:1096px;width:1.8px;height:40.5px;background:#c2c2c2;"></div>
<div class="b" style="left:0px;top:1146px;width:2130px;height:46px;background:linear-gradient(#dfdfdf,#d3d3d3);"></div>
<div class="b" style="left:0px;top:1146px;width:2130px;height:2px;background:linear-gradient(#a0a0a0,#b2b2b2);"></div>
<div class="b" style="left:1492px;top:1148px;width:74px;height:44px;background:#9b9b9b;"></div>
<span class="t" style="left:48.19px;top:1159px;font-size:23.3px;color:#555;letter-spacing:0.501px;">Ready</span>
<span class="t" style="left:2016.91px;top:1159px;font-size:23.5px;color:#555;letter-spacing:1.408px;">100%</span>
<div class="b" style="left:1754px;top:1165px;width:200.5px;height:8.5px;background:#9c9c9c;border-radius:4.5px;"></div>
<div class="b" style="left:1838px;top:1153px;width:32px;height:32px;background:#fff;border-radius:50%;box-shadow:0 0.5px 2px rgba(0,0,0,.4);"></div>
<svg class="b" style="left:0px;top:0px;" width="2130" height="1192" viewBox="0 0 2130 1192">
<path d="M1723.8 1169.2 L1740 1169.2" stroke="#5c5c5c" stroke-width="4.4"/>
<path d="M1968.2 1169.2 L1984.4 1169.2 M1976.3 1161.1 L1976.3 1177.3" stroke="#5c5c5c" stroke-width="4.4"/>
</svg>
<svg class="b" style="left:0px;top:0px;pointer-events:none" width="2130" height="1192" viewBox="0 0 2130 1192"><g fill="none" stroke="#ffffff" stroke-width="2.2" stroke-linejoin="round" stroke-linecap="round">
<path d="M403 27.6 L415.9 17.1 L428.9 27.6 L428.9 42.6 Q428.9 44.5 427 44.5 L421.6 44.5 Q419.7 44.5 419.7 42.6 L419.7 36.4 Q419.7 34.5 417.8 34.5 L414 34.5 Q412.1 34.5 412.1 36.4 L412.1 42.6 Q412.1 44.5 410.2 44.5 L404.9 44.5 Q403 44.5 403 42.6 Z"/>
</g></svg>
<svg class="b" style="left:0px;top:0px;pointer-events:none" width="2130" height="1192" viewBox="0 0 2130 1192"><g fill="none" stroke="#ffffff" stroke-width="2.1" stroke-linejoin="round">
<path d="M459.70000000000005 19.1 L476.90000000000003 19.1 L482.70000000000005 24.6 L482.70000000000005 41.8 Q482.70000000000005 44.8 479.70000000000005 44.8 L460.20000000000005 44.8 Q457.20000000000005 44.8 457.20000000000005 41.8 L457.20000000000005 22.1 Q457.20000000000005 19.1 460.20000000000005 19.1 Z"/>
<path d="M463.20000000000005 19.1 L463.20000000000005 24.9 Q463.20000000000005 26.9 465.20000000000005 26.9 L472.8 26.9 Q474.8 26.9 474.8 24.9 L474.8 19.1"/>
<path d="M461.20000000000005 44.8 L461.20000000000005 34.9 Q461.20000000000005 32.9 463.20000000000005 32.9 L477.1 32.9 Q479.1 32.9 479.1 34.9 L479.1 44.8"/>
</g></svg>
<svg class="b" style="left:0px;top:0px;pointer-events:none" width="2130" height="1192" viewBox="0 0 2130 1192"><g fill="none" stroke="#ffffff" stroke-width="2.1" stroke-linejoin="round">
<path d="M513.7 19.1 L530.9 19.1 L536.7 24.6 L536.7 41.8 Q536.7 44.8 533.7 44.8 L514.2 44.8 Q511.20000000000005 44.8 511.20000000000005 41.8 L511.20000000000005 22.1 Q511.20000000000005 19.1 514.2 19.1 Z"/>
<path d="M517.2 19.1 L517.2 24.9 Q517.2 26.9 519.2 26.9 L526.8000000000001 26.9 Q528.8000000000001 26.9 528.8000000000001 24.9 L528.8000000000001 19.1"/>
<path d="M515.2 44.8 L515.2 34.9 Q515.2 32.9 517.2 32.9 L531.1 32.9 Q533.1 32.9 533.1 34.9 L533.1 44.8"/>
</g></svg>
<svg class="b" style="left:0px;top:0px;pointer-events:none" width="2130" height="1192" viewBox="0 0 2130 1192"><path d="M535.6 33.5 L522.9 47.1" stroke="#12733b" stroke-width="10.8" stroke-linecap="round" fill="none"/>
<path d="M535.6 33.5 L546 33.5 L546 52 L518 52 Z" fill="#12733b"/>
<path d="M535.7 33.4 L527 42.8" stroke="#ffffff" stroke-width="6.6" stroke-linecap="round" fill="none"/>
<path d="M522.2 47.8 L523.6 40.4 L529.4 45.8 Z" fill="#ffffff" stroke="#ffffff" stroke-width="1.2" stroke-linejoin="round"/></svg>
<svg class="b" style="left:0px;top:0px;pointer-events:none" width="2130" height="1192" viewBox="0 0 2130 1192"><g fill="none" stroke="#ffffff" stroke-width="2.1">
<path d="M566.8 16 L566.8 27.3 L577.8 27.3"/>
<path d="M567.2 26.9 L576.6 19.4 A8.7 8.7 0 1 1 588.2 32.4 L571.2 47.2" stroke-linecap="round"/>
</g></svg>
<svg class="b" style="left:0px;top:0px;" width="2130" height="1192" viewBox="0 0 2130 1192"><path d="M610.9 29.6 L616.1 35.3 L621.3 29.6" fill="none" stroke="#ffffff" stroke-width="2.5" stroke-linecap="round" stroke-linejoin="round"/></svg>
<svg class="b" style="left:0px;top:0px;pointer-events:none" width="2130" height="1192" viewBox="0 0 2130 1192"><g fill="none" stroke="#63a682" stroke-width="2">
<path d="M670.86 25.10 A14.9 14.9 0 1 0 672.52 30.54"/>
<path d="M671.3 16 L671.3 24.9 L662.4 24.9"/>
</g></svg>
<svg class="b" style="left:0px;top:0px;pointer-events:none" width="2130" height="1192" viewBox="0 0 2130 1192"><circle cx="702.1" cy="32.1" r="2.7" fill="#ffffff"/><circle cx="712" cy="32.1" r="2.7" fill="#ffffff"/><circle cx="722" cy="32.1" r="2.7" fill="#ffffff"/></svg>
<svg class="b" style="left:0px;top:0px;pointer-events:none" width="2130" height="1192" viewBox="0 0 2130 1192"><path d="M956 16.8 L969.3 16.8 L978.1 26.6 L978.1 45.9 L956 45.9 Z" fill="#ffffff"/>
<path d="M969.3 16.8 L969.3 26.6 L978.1 26.6 Z" fill="#d9e7df"/>
<g fill="#3f9766"><rect x="968.4" y="28.5" width="2.9" height="1.9"/><rect x="972.2" y="28.5" width="2.9" height="1.9"/>
<rect x="968.4" y="31.3" width="2.9" height="1.9"/><rect x="972.2" y="31.3" width="2.9" height="1.9"/>
<rect x="968.4" y="34.1" width="2.9" height="1.9"/><rect x="972.2" y="34.1" width="2.9" height="1.9"/></g>
<rect x="952" y="23.9" width="14.6" height="14.6" rx="1.6" fill="#5f9e7c"/>
<path d="M956.4 27.4 L962.2 35 M962.2 27.4 L956.4 35" stroke="#fff" stroke-width="1.5" fill="none"/></svg>
<svg class="b" style="left:0px;top:0px;" width="2130" height="1192" viewBox="0 0 2130 1192"><path d="M1165.6 29.6 L1172.3 34.9 L1179 29.6" fill="none" stroke="#4f9c72" stroke-width="2.4" stroke-linecap="round" stroke-linejoin="round"/></svg>
<svg class="b" style="left:0px;top:0px;pointer-events:none" width="2130" height="1192" viewBox="0 0 2130 1192"><circle cx="2018.9" cy="28.9" r="9.85" fill="none" stroke="#ffffff" stroke-width="2"/><path d="M2026 36.9 L2035 45" stroke="#ffffff" stroke-width="2" stroke-linecap="round"/></svg>
<svg class="b" style="left:0px;top:0px;pointer-events:none" width="2130" height="1192" viewBox="0 0 2130 1192"><g fill="none" stroke="#ffffff" stroke-width="2" stroke-linejoin="round">
<circle cx="2083.9" cy="28.4" r="4.4"/>
<path d="M2077.2 37.2 L2091.2 37.2 Q2093.2 37.2 2093.2 39.2 A9 7.9 0 0 1 2075.2 39.2 Q2075.2 37.2 2077.2 37.2 Z"/>
<path d="M2094.3 17.1 L2102 17.1 Q2105 17.1 2105 20.1 L2105 23.9 Q2105 26.9 2102 26.9 L2098.6 26.9 L2094.9 31 L2094.9 26.9 L2094.3 26.9 Q2091.3 26.9 2091.3 23.9 L2091.3 20.1 Q2091.3 17.1 2094.3 17.1 Z"/>
</g></svg>
<svg class="b" style="left:0px;top:0px;pointer-events:none" width="2130" height="1192" viewBox="0 0 2130 1192"><g fill="#fafafa" stroke="#2b2b2b" stroke-width="1.9" stroke-linejoin="round">
<path d="M1241.4 99.6 C1241.2 94.8 1236.3 93.2 1235.5 87.7 A9.4 9.4 0 1 1 1254.3 87.7 C1253.5 93.2 1248.6 94.8 1248.4 99.6 Z"/>
<path d="M1241.4 99.6 L1248.4 99.6 L1248.9 103 L1240.9 103 Z"/>
</g><path d="M1242.3 107 L1247.9 107" stroke="#2b2b2b" stroke-width="1.7"/></svg>
<svg class="b" style="left:0px;top:0px;pointer-events:none" width="2130" height="1192" viewBox="0 0 2130 1192"><g fill="none" stroke="#1a6c3b" stroke-width="2">
<path d="M1783.6 92.8 L1783.6 107 L1801.3 107 L1801.3 102.4"/>
<path d="M1788.6 101.6 C1789.2 95 1793.5 90.6 1799.8 90.2 L1799.8 85.6 L1806.2 92.8 L1799.8 99.9 L1799.8 95.2 C1794.6 95.2 1791.2 97.4 1788.6 101.6 Z" fill="#fff" stroke-linejoin="miter"/>
</g>
<path d="M1938.7 85.1 L1957.3 85.1 Q1958.8 85.1 1958.8 86.6 L1958.8 99 Q1958.8 100.5 1957.3 100.5 L1951.3 100.5 L1943.4 106.8 L1943.4 100.5 L1938.7 100.5 Q1937.2 100.5 1937.2 99 L1937.2 86.6 Q1937.2 85.1 1938.7 85.1 Z" fill="none" stroke="#1a6c3b" stroke-width="2.2" stroke-linejoin="round"/></svg>
<svg class="b" style="left:0px;top:0px;pointer-events:none" width="2130" height="1192" viewBox="0 0 2130 1192"><rect x="34.9" y="151" width="40.2" height="46" fill="#f8d98c" stroke="#e8792b" stroke-width="2"/>
<rect x="40.3" y="155.4" width="30" height="36.6" fill="#f8f8f8"/>
<path d="M43.4 156.6 L43.4 149.4 L48.6 149.4 C49.4 140.6 60.4 140.6 61.2 149.4 L66.7 149.4 L66.7 156.6 Z" fill="#f8f8f8" stroke="#666460" stroke-width="2" stroke-linejoin="round"/>
<rect x="57.9" y="164" width="32.1" height="39.8" fill="#efefef"/>
<rect x="60.9" y="167" width="26.1" height="33.8" fill="#fafafa" stroke="#2b2b2b" stroke-width="2"/></svg>
<svg class="b" style="left:0px;top:0px;pointer-events:none" width="2130" height="1192" viewBox="0 0 2130 1192"><path d="M136.3 138 L137.6 138 L149.2 162.4 L147 163.4 Z" fill="#333" stroke="#333" stroke-width="0.5"/>
<path d="M148.2 138 L146.9 138 L135.1 162.4 L137.3 163.4 Z" fill="#333" stroke="#333" stroke-width="0.5"/>
<circle cx="136.1" cy="166" r="3.1" fill="#f4f4f4" stroke="#1e7fd0" stroke-width="2"/>
<circle cx="148.1" cy="166" r="3.1" fill="#f4f4f4" stroke="#1e7fd0" stroke-width="2"/></svg>
<svg class="b" style="left:0px;top:0px;pointer-events:none" width="2130" height="1192" viewBox="0 0 2130 1192"><path d="M127.2 183.2 L137.6 183.2 L141 186.4 L141 209 L127.2 209 Z" fill="#f8f8f8" stroke="#2b2b2b" stroke-width="2" stroke-linejoin="miter"/>
<rect x="136.4" y="186.6" width="6" height="24" fill="#efefef"/>
<path d="M139.2 189.2 L149.4 189.2 L157 196.6 L157 212.8 L139.2 212.8 Z" fill="#f8f8f8" stroke="#2b2b2b" stroke-width="2" stroke-linejoin="miter"/>
<path d="M149.4 189.2 L149.4 196.6 L157 196.6" fill="none" stroke="#2b2b2b" stroke-width="2"/>
<path d="M144.1 203.4 L152 203.4 M144.1 207.3 L152 207.3" stroke="#666" stroke-width="1.8"/></svg>
<svg class="b" style="left:0px;top:0px;pointer-events:none" width="2130" height="1192" viewBox="0 0 2130 1192"><path d="M127.2 240 C132 239.4 136.8 237.2 139.6 233.8 L150.6 245 L140.4 255 Z" fill="#fdfdfd" stroke="#e8792b" stroke-width="1.8" stroke-linejoin="round"/>
<path d="M132.6 245.2 L146.4 249.2 L140.4 255 Z" fill="#f8d98c" stroke="#e8792b" stroke-width="1.6" stroke-linejoin="round"/>
<g transform="translate(146.6 237.8) rotate(45)">
<rect x="-2.6" y="-14.2" width="5.2" height="13" rx="2.4" fill="#fafafa" stroke="#2b2b2b" stroke-width="1.9"/>
<rect x="-8.6" y="-2.9" width="17.2" height="5.6" rx="2.2" fill="#fafafa" stroke="#2b2b2b" stroke-width="1.9"/>
</g></svg>
<svg class="b" style="left:0px;top:0px;pointer-events:none" width="2130" height="1192" viewBox="0 0 2130 1192"><path d="M241.9 198 L262.6 141.8 L268.6 141.8 L288.6 198 L284.7 198 L278.5 181.7 L251.8 181.7 L245.7 198 Z M253.1 178.3 L277.2 178.3 L265.4 146.6 Z" fill="#333" fill-rule="evenodd"/></svg>
<svg class="b" style="left:0px;top:0px;pointer-events:none" width="2130" height="1192" viewBox="0 0 2130 1192"><g stroke="#333" stroke-width="1.9"><path d="M382 149.1 L437.8 149.1 M390 159.1 L430 159.1 M382 169.1 L437.8 169.1 M390 179.1 L430 179.1 M382 189.1 L437.8 189.1"/></g></svg>
<svg class="b" style="left:0px;top:0px;pointer-events:none" width="2130" height="1192" viewBox="0 0 2130 1192"><g fill="none" stroke="#333" stroke-width="2.6"><ellipse cx="541.6" cy="157.4" rx="9.2" ry="9"/><ellipse cx="570" cy="183.2" rx="9.2" ry="9"/><path d="M571.6 146.4 L541.8 193.4"/></g></svg>
<svg class="b" style="left:0px;top:0px;pointer-events:none" width="2130" height="1192" viewBox="0 0 2130 1192"><rect x="664.9" y="140.9" width="30.3" height="26.1" fill="#fafafa" stroke="#333" stroke-width="2"/>
<path d="M688.8 141 L688.8 167 M665 149.2 L695 149.2 M665 158.4 L695 158.4" stroke="#666460" stroke-width="1.8" fill="none"/>
<rect x="671.3" y="141" width="9.9" height="8.2" fill="#ff909b" stroke="#d3170c" stroke-width="2"/>
<rect x="671.3" y="149.4" width="5.8" height="9" fill="#7ab6ea" stroke="#0b5cb8" stroke-width="2"/>
<rect x="671.3" y="158.6" width="13.7" height="8.3" fill="#ff909b" stroke="#d3170c" stroke-width="2"/></svg>
<svg class="b" style="left:0px;top:0px;pointer-events:none" width="2130" height="1192" viewBox="0 0 2130 1192"><rect x="664.9" y="185.3" width="30.3" height="25.9" fill="#fafafa" stroke="#333" stroke-width="2"/>
<path d="M675.2 185.4 L675.2 211 M685 185.4 L685 211 M665 193.6 L695 193.6 M665 202.9 L695 202.9" stroke="#666460" stroke-width="1.8" fill="none"/>
<rect x="675.1" y="193.5" width="20.1" height="17.7" fill="#7ab6ea" stroke="#0b5cb8" stroke-width="2"/><path d="M695.6 193.8 L680 208.6" stroke="#f2f2f2" stroke-width="7" stroke-linecap="round"/>
<path d="M668.2 210.6 C672 204.6 678 203 684.4 205.6 C684 213 676 216 668.2 210.6 Z" fill="#f2f2f2" stroke="#f2f2f2" stroke-width="3.4"/>
<path d="M695.4 194.2 C691 195.6 684.6 201.6 681.4 206 L683 207.8 C688 204.6 694 198.6 695.4 194.2 Z" fill="#d6d6d6" stroke="#333" stroke-width="1.6" stroke-linejoin="round"/>
<path d="M670.2 210.4 C673 205.4 678 204.4 682.6 206.2 C682.4 211.6 676.4 214.4 670.2 210.4 Z" fill="#3d8fd8" stroke="#0b5cb8" stroke-width="1.6" stroke-linejoin="round"/></svg>
<svg class="b" style="left:0px;top:0px;pointer-events:none" width="2130" height="1192" viewBox="0 0 2130 1192"><rect x="664.9" y="229.5" width="30.3" height="25.3" fill="#fafafa" stroke="#333" stroke-width="2"/>
<path d="M670.8 229.6 L670.8 254.8 M689.9 229.6 L689.9 254.8 M665 235 L695 235 M665 250.3 L695 250.3" stroke="#666460" stroke-width="1.8" fill="none"/>
<rect x="671.3" y="235" width="18.6" height="15.3" fill="#7ab6ea"/>
<path d="M671.3 250.3 L671.3 235 L689.9 235" fill="none" stroke="#0b5cb8" stroke-width="2"/><path d="M695.6 237.8 L680 252.6" stroke="#f2f2f2" stroke-width="7" stroke-linecap="round"/>
<path d="M668.2 254.6 C672 248.6 678 247 684.4 249.6 C684 257 676 260 668.2 254.6 Z" fill="#f2f2f2" stroke="#f2f2f2" stroke-width="3.4"/>
<path d="M695.4 238.2 C691 239.6 684.6 245.6 681.4 250 L683 251.8 C688 248.6 694 242.6 695.4 238.2 Z" fill="#d6d6d6" stroke="#333" stroke-width="1.6" stroke-linejoin="round"/>
<path d="M670.2 254.4 C673 249.4 678 248.4 682.6 250.2 C682.4 255.6 676.4 258.4 670.2 254.4 Z" fill="#3d8fd8" stroke="#0b5cb8" stroke-width="1.6" stroke-linejoin="round"/></svg>
<svg class="b" style="left:0px;top:0px;pointer-events:none" width="2130" height="1192" viewBox="0 0 2130 1192"><rect x="1020.2" y="149" width="53.7" height="41.9" fill="#fafafa" stroke="#2b2b2b" stroke-width="2"/>
<path d="M1034.1 149 L1034.1 191 M1060.1 149 L1060.1 191 M1020 162.9 L1074 162.9 M1020 177.2 L1074 177.2" stroke="#666460" stroke-width="1.9" fill="none"/>
<rect x="1034.2" y="162.9" width="25.9" height="14.2" fill="#7ab6ea" stroke="#0b5cb8" stroke-width="2"/>
<path d="M1032.1 141.2 L1062.1 141.2 M1032.1 138 L1032.1 144.2 M1062.1 138 L1062.1 144.2" stroke="#1a78c9" stroke-width="2" fill="none"/></svg>
<svg class="b" style="left:0px;top:0px;pointer-events:none" width="2130" height="1192" viewBox="0 0 2130 1192"><circle cx="1191.9" cy="162.9" r="19.9" fill="#fafafa" stroke="#2b2b2b" stroke-width="2.2"/>
<path d="M1177.4 177.9 L1156 199" stroke="#2b2b2b" stroke-width="2.4" stroke-linecap="round"/></svg>
<svg class="b" style="left:0px;top:0px;pointer-events:none" width="2130" height="1192" viewBox="0 0 2130 1192"><rect x="1300.2" y="139.2" width="61.7" height="61.4" fill="#fafafa" stroke="#2b2b2b" stroke-width="2.4"/>
<rect x="1301.4" y="140.4" width="59.3" height="7.4" fill="#c4c2bd"/>
<path d="M1300 148.6 L1362 148.6" stroke="#4a4a4a" stroke-width="2"/>
<path d="M1300 166.6 L1362 166.6 M1300 182.6 L1362 182.6 M1320.5 183 L1320.5 200 M1341.3 183 L1341.3 200" stroke="#777470" stroke-width="2" fill="none"/>
<circle cx="1328.7" cy="165" r="21.6" fill="#f4f4f4"/>
<path d="M1343.4 181.6 L1362 200.8" stroke="#f4f4f4" stroke-width="6"/>
<circle cx="1328.7" cy="165" r="19.3" fill="#fafafa" stroke="#2b2b2b" stroke-width="2.4"/>
<path d="M1342.6 180.6 L1362.4 201" stroke="#2b2b2b" stroke-width="2.6"/>
<rect x="1318.2" y="162.5" width="7" height="11.6" fill="#c4c2bd" stroke="#6b6966" stroke-width="1.8"/>
<rect x="1333" y="157.8" width="6.6" height="16.3" fill="#7ab6ea" stroke="#0b5cb8" stroke-width="1.8"/>
<rect x="1325.4" y="153.2" width="6.6" height="20.9" fill="#fff" stroke="#333" stroke-width="2"/></svg>
<svg class="b" style="left:0px;top:0px;pointer-events:none" width="2130" height="1192" viewBox="0 0 2130 1192"><path d="M1461 143.1 L1440 143.1 L1440 196.8 L1479.9 196.8 L1479.9 171.5" fill="none" stroke="#a9cde6" stroke-width="2"/>
<g transform="translate(1476.9 154.4) rotate(45)">
<rect x="-5.5" y="-17.2" width="11" height="10" fill="#f1f1f1" stroke="#a9cde6" stroke-width="1.8"/>
<rect x="-14.7" y="-5.2" width="29.4" height="10.4" fill="#f1f1f1" stroke="#a9cde6" stroke-width="1.8"/>
<rect x="-15.6" y="5.2" width="31.2" height="5.2" fill="#a9cde6"/>
<rect x="-15.6" y="10.4" width="31.2" height="3" fill="#efefef"/>
<rect x="-13.7" y="18.6" width="27.4" height="10.3" fill="#f1f1f1" stroke="#a9cde6" stroke-width="1.8"/>
<rect x="-8.6" y="21.8" width="17.2" height="4" fill="#a9cde6"/>
</g></svg>
<svg class="b" style="left:0px;top:0px;pointer-events:none" width="2130" height="1192" viewBox="0 0 2130 1192"><g fill="none" stroke="#0e5ddf" stroke-width="2.4" stroke-linecap="round" stroke-linejoin="round">
<path d="M1659.6 191.7 L1648.7 191.7 Q1645.5 191.7 1645.5 188.5 L1645.5 150 Q1645.5 146.8 1648.7 146.8 L1666.3 146.8 L1681.1 161.9 L1681.1 166.9"/>
<path d="M1666 147 L1666 158.6 Q1666 161.9 1669.3 161.9 L1681 161.9"/>
<path d="M1671.7 183 L1667.5 183 Q1664.3 183 1664.3 186.2 L1664.3 197.3 Q1664.3 200.5 1667.5 200.5 L1689.6 200.5 Q1692.8 200.5 1692.8 197.3 L1692.8 186.2 Q1692.8 183 1689.6 183 L1685.4 183"/>
<path d="M1678.5 190.4 L1678.5 172 M1672.7 178 L1678.5 171.8 L1684.8 178"/>
</g></svg>
<svg class="b" style="left:0px;top:0px;pointer-events:none" width="2130" height="1192" viewBox="0 0 2130 1192"><rect x="1516" y="1156.1" width="26" height="26.2" rx="2" fill="#ffffff"/>
<g fill="#9b9b9b"><rect x="1518.3" y="1158.4" width="5.6" height="5.7"/><rect x="1518.3" y="1166.4" width="5.6" height="5.7"/><rect x="1518.3" y="1174.3" width="5.6" height="5.7"/><rect x="1526.2" y="1158.4" width="5.6" height="5.7"/><rect x="1526.2" y="1166.4" width="5.6" height="5.7"/><rect x="1526.2" y="1174.3" width="5.6" height="5.7"/><rect x="1534.1" y="1158.4" width="5.6" height="5.7"/><rect x="1534.1" y="1166.4" width="5.6" height="5.7"/><rect x="1534.1" y="1174.3" width="5.6" height="5.7"/></g>
<g fill="none" stroke="#555" stroke-width="2.2" stroke-linejoin="round">
<rect x="1588.1" y="1157.2" width="25.7" height="24" rx="1"/>
<rect x="1659.4" y="1157.2" width="25.5" height="24" rx="1"/>
</g>
<rect x="1594" y="1161" width="14" height="15.7" fill="none" stroke="#555" stroke-width="2"/>
<path d="M1597.2 1165 L1604.8 1165 M1597.2 1169 L1604.8 1169 M1597.2 1173 L1604.8 1173" stroke="#555" stroke-width="1.8"/>
<path d="M1667 1157 L1667 1171 M1675.2 1157 L1675.2 1171 L1659.4 1171" fill="none" stroke="#555" stroke-width="2"/></svg>
</div></body></html>
